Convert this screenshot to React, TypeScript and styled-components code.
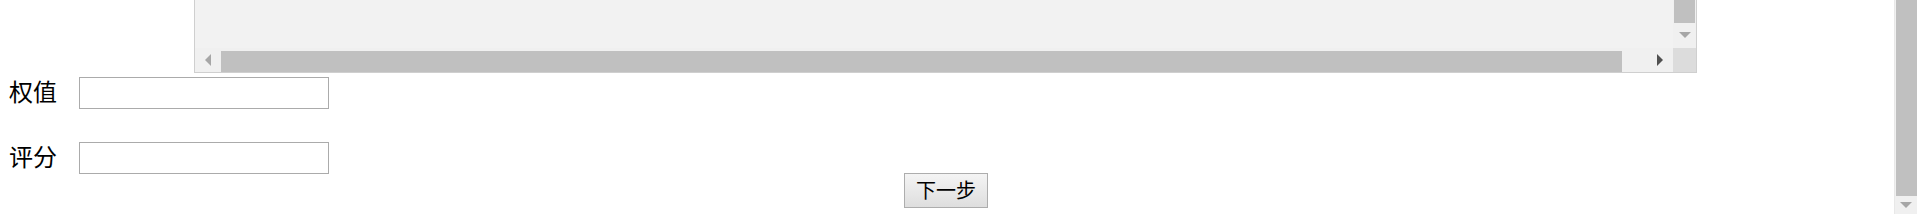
import React from 'react';
import styled, { createGlobalStyle } from 'styled-components';

const GlobalStyle = createGlobalStyle`
  html, body {
    margin: 0;
    padding: 0;
    background: #ffffff;
    overflow: hidden;
  }
  body {
    font-family: "Noto Sans CJK SC", "Noto Sans", sans-serif;
    color: #000;
  }
`;

const Page = styled.div`
  display: flex;
  width: 1917px;
  height: 214px;
  overflow: hidden;
`;

const Main = styled.div`
  flex: 1;
  display: flex;
  flex-direction: column;
`;

/* bottom part of the scrolled list box */
const ListBox = styled.div`
  margin-left: 194px;
  width: 1501px;
  height: 72px;
  border: 1px solid #cfcfcf;
  border-top: none;
  display: flex;
  flex-direction: column;
  background: #f2f2f2;
`;

const ListBody = styled.div`
  flex: 1;
  display: flex;
`;

const ListContent = styled.div`
  flex: 1;
`;

const VScroll = styled.div`
  width: 23px;
  background: #f0f0f0;
  display: flex;
  flex-direction: column;
  align-items: center;
`;

const VThumb = styled.div`
  width: 21px;
  height: 23px;
  background: #c0c0c0;
`;

const ArrowBox = styled.div<{ $w?: number; $h?: number }>`
  width: ${(p) => p.$w ?? 23}px;
  height: ${(p) => p.$h ?? 24}px;
  display: flex;
  align-items: center;
  justify-content: center;
  flex-shrink: 0;
`;

const HScroll = styled.div`
  height: 24px;
  display: flex;
  background: #f0f0f0;
`;

const HTrack = styled.div`
  flex: 1;
  display: flex;
  align-items: center;
`;

const HThumb = styled.div`
  width: 1401px;
  height: 21px;
  margin-top: 2px;
  background: #c0c0c0;
`;

const Corner = styled.div`
  width: 23px;
  background: #dcdcdc;
`;

const Form = styled.div`
  padding-top: 4px;
  display: flex;
  flex-direction: column;
`;

const Field = styled.div`
  display: flex;
  align-items: center;
  height: 31px;
  & + & {
    margin-top: 34px;
  }
`;

const Label = styled.label`
  width: 70px;
  padding-left: 9px;
  font-size: 24px;
  line-height: 31px;
  margin-top: -5px;
`;

const TextInput = styled.input`
  box-sizing: border-box;
  width: 250px;
  height: 32px;
  margin: 0;
  border: 1px solid #ababab;
  background: #fff;
  outline: none;
`;

const Actions = styled.div`
  text-align: center;
  padding-right: 2px;
`;

const NextButton = styled.button`
  box-sizing: border-box;
  width: 84px;
  height: 35px;
  margin: 0;
  padding: 0 0 2px;
  font-family: "Noto Sans CJK SC", "Noto Sans", sans-serif;
  font-size: 20px;
  color: #000;
  border: 1px solid #adadad;
  border-radius: 0;
  background: linear-gradient(#f4f4f4, #dedede);
`;

const PageScroll = styled.div`
  width: 23px;
  height: 214px;
  background: #f0f0f0;
  border-left: 1px solid #e8e8e8;
  box-sizing: border-box;
  display: flex;
  flex-direction: column;
  align-items: center;
`;

const PageThumb = styled.div`
  width: 21px;
  height: 196px;
  background: #c0c0c0;
`;

type Dir = 'left' | 'right' | 'down';

const Arrow = ({ dir, color }: { dir: Dir; color: string }) => {
  if (dir === 'down') {
    return (
      <svg width="12" height="7" viewBox="0 0 12 7">
        <polygon points="0,0 12,0 6,6" fill={color} />
      </svg>
    );
  }
  const pts = dir === 'left' ? '6,0 6,12 0,6' : '0,0 0,12 6,6';
  return (
    <svg width="7" height="12" viewBox="0 0 7 12">
      <polygon points={pts} fill={color} />
    </svg>
  );
};

const App = () => {
  return (
    <>
      <GlobalStyle />
      <Page>
        <Main>
          <ListBox>
            <ListBody>
              <ListContent />
              <VScroll>
                <VThumb />
                <ArrowBox $h={24}>
                  <Arrow dir="down" color="#a6a6a6" />
                </ArrowBox>
              </VScroll>
            </ListBody>
            <HScroll>
              <ArrowBox $w={26}>
                <Arrow dir="left" color="#a6a6a6" />
              </ArrowBox>
              <HTrack>
                <HThumb />
              </HTrack>
              <ArrowBox $w={26}>
                <Arrow dir="right" color="#505050" />
              </ArrowBox>
              <Corner />
            </HScroll>
          </ListBox>
          <Form>
            <Field>
              <Label>权值</Label>
              <TextInput type="text" />
            </Field>
            <Field>
              <Label>评分</Label>
              <TextInput type="text" />
            </Field>
            <Actions>
              <NextButton type="button">下一步</NextButton>
            </Actions>
          </Form>
        </Main>
        <PageScroll>
          <PageThumb />
          <ArrowBox $w={22} $h={18}>
            <Arrow dir="down" color="#a6a6a6" />
          </ArrowBox>
        </PageScroll>
      </Page>
    </>
  );
};

export default App;
